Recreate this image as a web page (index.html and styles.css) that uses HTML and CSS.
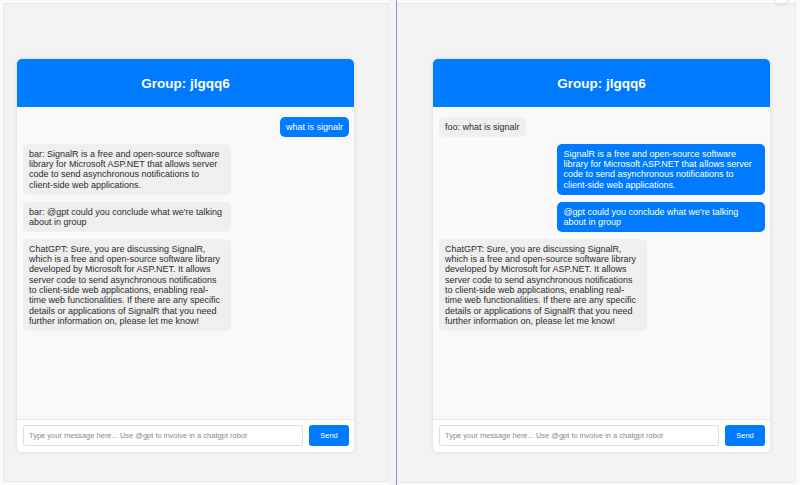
FILE: index.html
```html
<!DOCTYPE html>
<html lang="en">
<head>
    <meta charset="UTF-8">
    <meta name="viewport" content="width=device-width, initial-scale=1.0">
    <title>SignalR Group Chat</title>
    <link rel="stylesheet" href="styles.css">
</head>
<body>
    <div class="desktop">
        <div class="window window-left">
            <div class="chat">
                <div class="chat-header">Group: jlgqq6</div>
                <div class="messages">
                    <div class="message mine">what is signalr</div>
                    <div class="message">bar: SignalR is a free and open-source software library for Microsoft ASP.NET that allows server code to send asynchronous notifications to client-side web applications.</div>
                    <div class="message">bar: @gpt could you conclude what we're talking about in group</div>
                    <div class="message">ChatGPT: Sure, you are discussing SignalR, which is a free and open-source software library developed by Microsoft for ASP.NET. It allows server code to send asynchronous notifications to client-side web applications, enabling real-time web functionalities. If there are any specific details or applications of SignalR that you need further information on, please let me know!</div>
                </div>
                <div class="composer">
                    <input type="text" placeholder="Type your message here... Use @gpt to involve in a chatgpt robot">
                    <button>Send</button>
                </div>
            </div>
        </div>

        <div class="divider"></div>

        <div class="window window-right">
            <div class="corner-icon"></div>
            <div class="chat">
                <div class="chat-header">Group: jlgqq6</div>
                <div class="messages">
                    <div class="message">foo: what is signalr</div>
                    <div class="message mine">SignalR is a free and open-source software library for Microsoft ASP.NET that allows server code to send asynchronous notifications to client-side web applications.</div>
                    <div class="message mine">@gpt could you conclude what we're talking about in group</div>
                    <div class="message">ChatGPT: Sure, you are discussing SignalR, which is a free and open-source software library developed by Microsoft for ASP.NET. It allows server code to send asynchronous notifications to client-side web applications, enabling real-time web functionalities. If there are any specific details or applications of SignalR that you need further information on, please let me know!</div>
                </div>
                <div class="composer">
                    <input type="text" placeholder="Type your message here... Use @gpt to involve in a chatgpt robot">
                    <button>Send</button>
                </div>
            </div>
        </div>
    </div>
</body>
</html>
```

FILE: styles.css
```css
* {
    box-sizing: border-box;
}

body {
    margin: 0;
    background-color: #fbfbfb;
    font-family: "Liberation Sans", Arial, sans-serif;
    overflow: hidden;
}

.desktop {
    display: flex;
    align-items: flex-start;
    height: 485px;
}

.window {
    position: relative;
    margin-top: 3px;
    height: 479px;
    background-color: #f3f3f3;
    border: 1px solid #e8e8e8;
}

.window-left {
    margin-left: 3px;
    width: 386px;
    padding: 55px 0 0 13px;
}

.window-right {
    width: 399px;
    height: 480px;
    padding: 55px 0 0 36px;
    border-left: none;
}

.divider {
    width: 8px;
    height: 485px;
    background-color: #f4f4f4;
    border-right: 1px solid #8594cb;
}

.corner-icon {
    position: absolute;
    top: -14px;
    right: 6px;
    width: 16px;
    height: 16px;
    border: 1px solid #dcdcdc;
    border-radius: 50%;
}

.chat {
    width: 337px;
    height: 393px;
    display: flex;
    flex-direction: column;
    background-color: #f9f9f9;
    border-radius: 5px;
    box-shadow: 0 0 5px rgba(0, 0, 0, 0.1);
    overflow: hidden;
}

.chat-header {
    height: 48px;
    display: flex;
    align-items: center;
    justify-content: center;
    background-color: #007bff;
    color: #fff;
    font-size: 13.5px;
    font-weight: bold;
}

.messages {
    flex: 1;
    display: flex;
    flex-direction: column;
    align-items: flex-start;
    padding: 10px 5px 6px 6px;
}

.message {
    box-sizing: content-box;
    max-width: 60%;
    margin-bottom: 6.5px;
    padding: 5px 6px;
    border-radius: 5px;
    background-color: #efefef;
    color: #2b2b2b;
    font-size: 9px;
    line-height: 1.149;
}

.message.mine {
    align-self: flex-end;
    background-color: #007bff;
    color: #fff;
}

.composer {
    display: flex;
    gap: 6px;
    padding: 5px 5px 6px 6px;
    background-color: #fff;
    border-top: 1px solid #e6e6e6;
}

.composer input {
    flex: 1;
    height: 21px;
    padding: 0 5px;
    border: 1px solid #dedede;
    border-radius: 2px;
    font-family: "Liberation Sans", Arial, sans-serif;
    font-size: 7.5px;
    color: #333;
    outline: none;
}

.composer input::placeholder {
    color: #8a8a8a;
}

.composer button {
    width: 40px;
    height: 21px;
    border: none;
    border-radius: 3px;
    background-color: #007bff;
    color: #fff;
    font-family: "Liberation Sans", Arial, sans-serif;
    font-size: 7.5px;
    cursor: pointer;
}
```
